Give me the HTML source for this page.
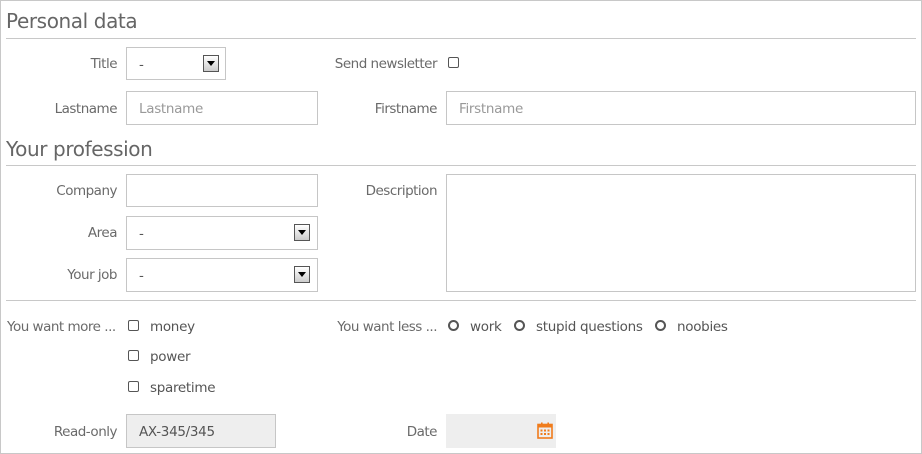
<!DOCTYPE html>
<html><head><meta charset="utf-8"><style>
*{box-sizing:border-box;margin:0;padding:0}
body{width:922px;height:454px;background:#fff;font-family:"DejaVu Sans","Liberation Sans",sans-serif;font-size:13.5px;color:#6a6a6a;position:relative;overflow:hidden}
.frame{position:absolute;left:0;top:0;width:922px;height:454px;border:1px solid #c8c8c8}
.a{position:absolute}
h2{position:absolute;left:6px;font-weight:normal;font-size:20px;color:#666;letter-spacing:-0.4px}
.rule{position:absolute;left:6px;width:910px;height:1px;background:#c8c8c8}
.lbl{position:absolute;text-align:right;white-space:nowrap;letter-spacing:-0.5px;margin-top:1px}
.box{position:absolute;border:1px solid #c6c6c6;background:#fff;padding-left:12px;padding-top:2px;display:flex;align-items:center;color:#555;letter-spacing:-0.3px}
.ph{color:#999}
.arr{position:absolute;width:16px;height:17px;border:1px solid #555;background:linear-gradient(#fff,#ccc);top:7px}
.arr:after{content:"";position:absolute;left:3px;top:5px;border-left:4px solid transparent;border-right:4px solid transparent;border-top:5px solid #000}
.cb{position:absolute;width:11px;height:11px;border:1.5px solid #555;border-radius:2px}
.rd{position:absolute;width:11px;height:11px;border:2px solid #555;border-radius:50%}
.t{position:absolute;white-space:nowrap;color:#555;letter-spacing:-0.3px;margin-top:1px}
</style></head><body>
<div class="frame"></div>
<h2 style="top:9px">Personal data</h2>
<div class="rule" style="top:38px"></div>
<div class="lbl" style="right:805px;top:55px">Title</div>
<div class="box" style="left:126px;top:47px;width:100px;height:33px">-<div class="arr" style="left:76px"></div></div>
<div class="lbl" style="right:485px;top:55px">Send newsletter</div>
<div class="cb" style="left:448px;top:57px"></div>
<div class="lbl" style="right:805px;top:100px">Lastname</div>
<div class="box ph" style="left:126px;top:91px;width:192px;height:34px"><span class="ph">Lastname</span></div>
<div class="lbl" style="right:485px;top:100px">Firstname</div>
<div class="box" style="left:446px;top:91px;width:470px;height:34px"><span class="ph">Firstname</span></div>
<h2 style="top:137px">Your profession</h2>
<div class="rule" style="top:165px"></div>
<div class="lbl" style="right:805px;top:182px">Company</div>
<div class="box" style="left:126px;top:174px;width:192px;height:33px"></div>
<div class="lbl" style="right:485px;top:182px">Description</div>
<div class="box" style="left:446px;top:174px;width:470px;height:118px"></div>
<div class="lbl" style="right:805px;top:224px">Area</div>
<div class="box" style="left:126px;top:216px;width:192px;height:34px">-<div class="arr" style="left:167px"></div></div>
<div class="lbl" style="right:805px;top:266px">Your job</div>
<div class="box" style="left:126px;top:258px;width:192px;height:34px">-<div class="arr" style="left:167px"></div></div>
<div class="rule" style="top:300px"></div>
<div class="lbl" style="left:7px;top:318px">You want more ...</div>
<div class="cb" style="left:128px;top:320px"></div><div class="t" style="left:150px;top:318px">money</div>
<div class="cb" style="left:128px;top:350px"></div><div class="t" style="left:150px;top:348px">power</div>
<div class="cb" style="left:128px;top:381px"></div><div class="t" style="left:150px;top:379px">sparetime</div>
<div class="lbl" style="right:485px;top:318px">You want less ...</div>
<div class="rd" style="left:448px;top:320px"></div><div class="t" style="left:470px;top:318px">work</div>
<div class="rd" style="left:514px;top:320px"></div><div class="t" style="left:536px;top:318px">stupid questions</div>
<div class="rd" style="left:655px;top:320px"></div><div class="t" style="left:677px;top:318px">noobies</div>
<div class="lbl" style="right:805px;top:423px">Read-only</div>
<div class="box" style="left:126px;top:414px;width:150px;height:34px;background:#eee">AX-345/345</div>
<div class="lbl" style="right:485px;top:423px">Date</div>
<div class="box" style="left:446px;top:414px;width:110px;height:34px;background:#eee;border-color:#eee"></div>
<svg class="a" style="left:537px;top:422px" width="16" height="17" viewBox="0 0 16 17"><rect x="1" y="2.5" width="14" height="13.5" fill="none" stroke="#f07c1c" stroke-width="1.6"/><rect x="1" y="2.5" width="14" height="3" fill="#f07c1c"/><rect x="4" y="0.5" width="1.6" height="3" fill="#f07c1c"/><rect x="10.4" y="0.5" width="1.6" height="3" fill="#f07c1c"/><g fill="#f07c1c"><rect x="3.5" y="7.5" width="2" height="2"/><rect x="7" y="7.5" width="2" height="2"/><rect x="10.5" y="7.5" width="2" height="2"/><rect x="3.5" y="11" width="2" height="2"/><rect x="7" y="11" width="2" height="2"/><rect x="10.5" y="11" width="2" height="2"/></g></svg>
</body></html>
